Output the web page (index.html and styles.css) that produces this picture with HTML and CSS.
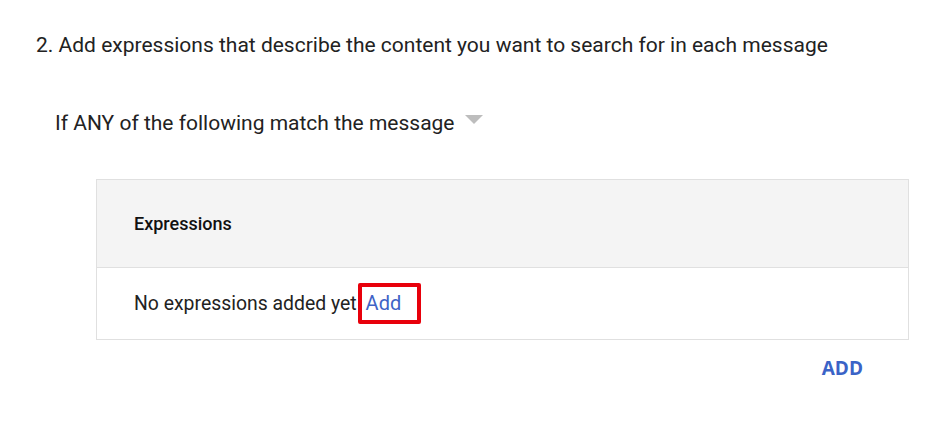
FILE: index.html
```html
<!DOCTYPE html>
<html>
<head>
<meta charset="utf-8">
<link rel="stylesheet" href="styles.css">
</head>
<body>
<div class="page">
  <p class="step">2. Add expressions that describe the content you want to search for in each message</p>
  <div class="match">
    <span>If ANY of the following match the message</span>
    <span class="caret"></span>
  </div>
  <div class="table">
    <div class="thead">Expressions</div>
    <div class="trow">
      <span>No expressions added yet</span>
      <span class="hl"><a class="link">Add</a></span>
    </div>
  </div>
  <div class="actions"><button class="add">ADD</button></div>
</div>
</body>
</html>
```
FILE: styles.css
```css
* { box-sizing: border-box; }
html, body { margin: 0; background: #fff; }
body { font-family: Roboto, "Noto Sans", sans-serif; color: #222; }
.page { padding: 31px 28px 0 36px; }
.step { margin: 0; font-size: 21px; line-height: 28px; color: #222; }
.match { display: flex; align-items: center; margin: 50px 0 0 19px; font-size: 21px; line-height: 28px; }
.caret { width: 0; height: 0; border-left: 9.5px solid transparent; border-right: 9.5px solid transparent; border-top: 9px solid #bdbdbd; margin-left: 10px; margin-top: -8px; }
.table { margin: 42px 0 0 60px; width: 813px; border: 1px solid #e0e0e0; }
.thead { background: #f4f4f4; height: 88px; border-bottom: 1px solid #e0e0e0; padding-left: 37px; display: flex; align-items: center; font-size: 18px; font-weight: 500; color: #111; }
.trow { height: 71px; padding-left: 37px; display: flex; align-items: center; font-size: 19.4px; color: #222; }
.hl { border: 4px solid #e8000b; border-radius: 2px; padding: 0 16px 0 4px; margin-left: 1px; line-height: 33px; }
.link { color: #3f63c6; font-size: 20px; }
.actions { display: flex; justify-content: flex-end; width: 837px; margin-top: 16px; }
.add { background: none; border: none; padding: 0 10px; font-family: "Open Sans", sans-serif; font-weight: 700; font-size: 19px; color: #3a63c7; line-height: 24px; }
```
